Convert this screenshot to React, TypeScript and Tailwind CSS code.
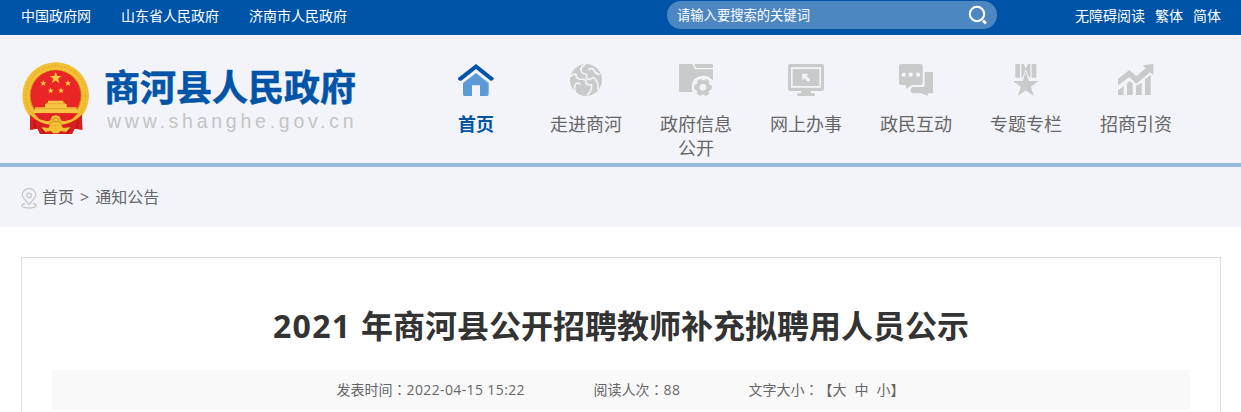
import type { ReactNode } from "react";

const topLinks = ["中国政府网", "山东省人民政府", "济南市人民政府"];
const tools = ["无障碍阅读", "繁体", "简体"];

function Emblem() {
    const star = "M0 -10 L2.4 -3.1 L9.5 -3.1 L3.8 1.2 L5.9 8.1 L0 3.9 L-5.9 8.1 L-3.8 1.2 L-9.5 -3.1 L-2.4 -3.1Z";
    return (
        <svg width="68" height="73" viewBox="0 0 204 219" className="shrink-0">
            <path d="M26 155 L178 155 L181 203 L158 200 L150 216 L54 216 L47 200 L24 203Z" fill="#d81f1f" />
            <path d="M34 160 L42 198 M170 160 L162 198 M62 200 L66 214 M142 200 L138 214" stroke="#a81518" strokeWidth="4" />
            <circle cx="101" cy="101" r="100" fill="#f2bf35" />
            <circle cx="101" cy="101" r="90" fill="none" stroke="#e5aa2a" strokeWidth="4" strokeDasharray="5 5" />
            <circle cx="101" cy="101" r="78" fill="#c88b1c" />
            <circle cx="101" cy="100" r="75" fill="#ea2525" />
            <g fill="#f7c744">
                <path d={star} transform="translate(101 48) scale(1.9)" />
                <path d={star} transform="translate(64 64)" />
                <path d={star} transform="translate(138 64)" />
                <path d={star} transform="translate(86 86)" />
                <path d={star} transform="translate(117 86)" />
                <path d="M78 116 H124 V122 H129 V126 H134 V136 H163 L168 154 H36 L40 136 H69 V126 H73 V122 H78Z" />
            </g>
            <path d="M74 125 H128 M42 140 H162" stroke="#dc9d25" strokeWidth="2" />
            <path d="M36 154 H168 L150 172 Q101 190 52 172Z" fill="#e32323" />
            <path d="M30 158 Q58 182 84 176 L90 163 L101 160 L112 163 L118 176 Q146 182 172 158 L178 166 Q150 188 126 190 L110 186 H94 L76 190 Q50 188 26 166Z" fill="#f2bf35" />
            <path d="M24 158 Q50 184 84 188 L78 200 H58 L54 216 L47 200 L24 203Z M180 158 Q152 184 118 188 L124 200 H146 L150 216 L157 200 L181 203Z" fill="#d81f1f" />
            <path d="M36 176 L40 198 M168 176 L164 198" stroke="#a81518" strokeWidth="4" />
            <path d="M82 198 L90 190 L101 194 L112 190 L120 198 L146 196 L132 210 L116 207 L108 214 H94 L86 207 L70 210 L58 196Z" fill="#f2bf35" />
            <path d="M89 174 L101 167 L113 174 M82 184 L94 178 H108 L120 184" stroke="#d08b20" strokeWidth="3" fill="none" />
        </svg>
    );
}

function HomeIcon() {
    return (
        <svg width="36" height="32" viewBox="0 0 108 96">
            <path d="M54 27 L92 57 V91 Q92 96 87 96 H66 V64 H42 V96 H20 Q15 96 15 91 V57Z" fill="#5c9bd8" />
            <path d="M54 0 L107 42 V46 L102 50 H98 L54 15 L10 50 H5 L0 46 V42Z" fill="#0054a7" />
        </svg>
    );
}

function GlobeIcon() {
    return (
        <svg width="32" height="32" viewBox="0 0 96 96">
            <circle cx="48" cy="48" r="48" fill="#c9caca" />
            <g fill="none" stroke="#f3f4f9" strokeWidth="5" strokeLinecap="round" strokeLinejoin="round">
                <path d="M46 0 Q28 11 35 24 Q40 30 48 31 Q52 33 49 41 Q55 50 65 43 Q70 38 77 47 Q86 57 84 76" />
                <path d="M2 37 Q10 29 18 31 Q17 42 27 45 L42 46 Q50 49 48 58 Q56 65 64 62 Q68 74 53 93" />
                <path d="M20 92 Q9 75 16 62 Q21 54 30 60" />
                <path d="M57 17 Q65 10 72 19 Q76 29 87 31" />
            </g>
        </svg>
    );
}

function FolderIcon() {
    return (
        <svg width="34" height="32" viewBox="0 0 102 96" fill="#c9caca">
            <path d="M3 0 H40 L48 16 H102 V49 Q91 35 73 35 Q40 36 38 68 Q38 77 41 84 H3 Q0 84 0 81 V3 Q0 0 3 0Z" />
            <path d="M46 0 H99 Q102 0 102 3 V10 Q102 12 99 12 H53 Q48 11 46 0Z" />
            <circle cx="72" cy="70" r="16" fill="none" stroke="#c9caca" strokeWidth="12" />
            <circle cx="72" cy="70" r="23.5" fill="none" stroke="#c9caca" strokeWidth="6" strokeDasharray="14.3 10.3" strokeDashoffset="7" />
        </svg>
    );
}

function MonitorIcon() {
    return (
        <svg width="36" height="32" viewBox="0 0 108 96" fill="#c9caca">
            <path fillRule="evenodd" d="M6 0 H102 Q108 0 108 6 V75 Q108 81 102 81 H6 Q0 81 0 75 V6 Q0 0 6 0Z M9 10 V71 H99 V10Z" />
            <path d="M14 15 H94 V66 H14Z M39 81 H69 V88 H80 V96 H28 V88 H39Z" />
            <path d="M42 29 L61 30 L56 36 L67 48 L61 54 L49 43 L43 49Z" fill="#f3f4f9" />
        </svg>
    );
}

function ChatIcon() {
    return (
        <svg width="34" height="32" viewBox="0 0 102 96" fill="#c9caca">
            <path d="M5 0 H66 Q71 0 71 5 V58 Q71 63 66 63 H38 L21 75 V63 H5 Q0 63 0 58 V5 Q0 0 5 0Z" />
            <path d="M77 24 H98 Q102 24 102 28 V88 H86 V96 L68 88 H42 Q34 86 35 78 Q36 69 44 69 H70 Q77 69 77 62Z" />
            <g fill="#f3f4f9">
                <circle cx="14" cy="32" r="6.5" />
                <circle cx="35" cy="32" r="6.5" />
                <circle cx="57" cy="32" r="6.5" />
            </g>
        </svg>
    );
}

function MedalIcon() {
    return (
        <svg width="26" height="32" viewBox="0 0 78 96" fill="#c9caca">
            <path d="M7 0 H21 V41 H7Z M56 0 H70 V41 H56Z M25 0 H32 L38 15 L45 0 H52 V40 H48 L38 16 L29 40 H25Z" />
            <path d="M38 23 L48 51 H77 L54 68 L62 96 L38 79 L15 96 L23 68 L0 51 H29Z" />
        </svg>
    );
}

function ChartIcon() {
    return (
        <svg width="36" height="32" viewBox="0 0 108 96" fill="#c9caca">
            <path d="M0 45 L34 18 L55 37 L83 13 L74 4 L106 0 V33 L96 25 L55 59 L34 39 L0 64Z" />
            <path d="M0 79 L17 67 V93 H0Z M27 60 L34 50 L44 58 V93 H27Z M54 66 L71 56 V93 H54Z M81 46 L98 33 V93 H81Z" />
        </svg>
    );
}

const navItems: { label: string; icon: ReactNode; active?: boolean }[] = [
    { label: "首页", icon: <HomeIcon />, active: true },
    { label: "走进商河", icon: <GlobeIcon /> },
    { label: "政府信息公开", icon: <FolderIcon /> },
    { label: "网上办事", icon: <MonitorIcon /> },
    { label: "政民互动", icon: <ChatIcon /> },
    { label: "专题专栏", icon: <MedalIcon /> },
    { label: "招商引资", icon: <ChartIcon /> },
];

// Full-width colon centred in its cell
function Colon() {
    return <span className="font-['Noto_Sans_CJK_TC',sans-serif]">：</span>;
}

export default function App() {
    return (
        <div className="h-[412px] w-[1241px] overflow-hidden bg-white font-['Open_Sans','Noto_Sans_CJK_SC',sans-serif] text-[#666]">
            <div className="flex h-[35px] items-start bg-[#0054a7] pl-[21px] text-sm text-white">
                <div className="flex w-[646px] gap-[30px] pt-[6px] leading-5">
                    {topLinks.map((link) => (
                        <a key={link}>{link}</a>
                    ))}
                </div>
                <div className="mt-px flex h-7 w-[330px] items-center justify-between rounded-full bg-[#4d87c1] pr-[9px] pl-[10px]">
                    <span className="-mt-px text-[13.3px] leading-5">请输入要搜索的关键词</span>
                    <svg width="20" height="20" viewBox="0 0 20 20" fill="none" stroke="#fff">
                        <circle cx="9" cy="9" r="7.2" strokeWidth="2.1" />
                        <path d="M15 15.5 L18 18.5" strokeWidth="2.8" />
                    </svg>
                </div>
                <div className="ml-auto flex gap-[10px] pt-[6px] pr-5 leading-5">
                    {tools.map((tool) => (
                        <a key={tool}>{tool}</a>
                    ))}
                </div>
            </div>

            <header className="flex h-[132px] border-b-4 border-[#98bbda] bg-[#f3f4f9] pl-[22px]">
                <div className="flex w-[399px] pt-[27px]">
                    <Emblem />
                    <div className="pl-[14px]">
                        <h1 className="mt-px h-[48px] text-[36px] leading-[49px] font-bold whitespace-nowrap text-[#0054a7] [-webkit-text-stroke:0.6px_#0054a7]">
                            商河县人民政府
                        </h1>
                        <p className="pl-[3px] font-['Liberation_Sans',sans-serif] text-[19.5px] leading-5 tracking-[3.75px] text-[#c4c4c4]">www.shanghe.gov.cn</p>
                    </div>
                </div>
                <nav className="flex pt-[29px]">
                    {navItems.map((item) => (
                        <a key={item.label} className="flex w-[110px] flex-col items-center">
                            {item.icon}
                            <span
                                className={
                                    item.active
                                        ? "mt-4 w-[74px] text-center text-lg leading-6 font-bold text-[#0054a7]"
                                        : "mt-4 w-[74px] text-center text-lg leading-6"
                                }
                            >
                                {item.label}
                            </span>
                        </a>
                    ))}
                </nav>
            </header>

            <div className="flex h-[60px] items-center bg-[#f3f4f9] pl-[21px] text-base">
                <svg width="16" height="21" viewBox="0 0 16 21" fill="none" stroke="#c8c8c8" strokeWidth="1.3" className="mt-[3px] mr-[5px]">
                    <path d="M8 16.5 C5 12.5 1.2 10 1.2 6.8 A6.8 6.2 0 0 1 14.8 6.8 C14.8 10 11 12.5 8 16.5Z" />
                    <circle cx="8" cy="7.5" r="2.3" />
                    <path d="M4 15.5 C-1 16.5 0 19.8 8 19.8 S17 16.5 12 15.5" />
                </svg>
                <a>首页</a>
                <span className="mx-[6px] text-base">&gt;</span>
                <a>通知公告</a>
            </div>

            <main className="mx-auto mt-[30px] h-[200px] w-[1200px] border border-[#ddd] px-[30px]">
                <h2 className="mt-[48px] h-[64px] pl-px text-center text-[32px] leading-[40px] font-bold whitespace-nowrap text-[#333]">
                    <span className="tracking-[1.3px]">2021 </span>年商河县公开招聘教师补充拟聘用人员公示
                </h2>
                <div className="flex h-10 items-center bg-[#f9f9f9] pb-[2px] pl-[285px] text-sm whitespace-pre">
                    <span className="w-[257px]">发表时间<Colon /><span className="tracking-[0.38px]">2022-04-15 15:22</span></span>
                    <span className="w-[155px]">阅读人次<Colon /><span className="tracking-[0.38px]">88</span></span>
                    <span>文字大小<Colon /><span className="inline-block">【</span>大<span className="ml-2">中</span><span className="ml-2">小</span>】</span>
                </div>
            </main>
        </div>
    );
}
